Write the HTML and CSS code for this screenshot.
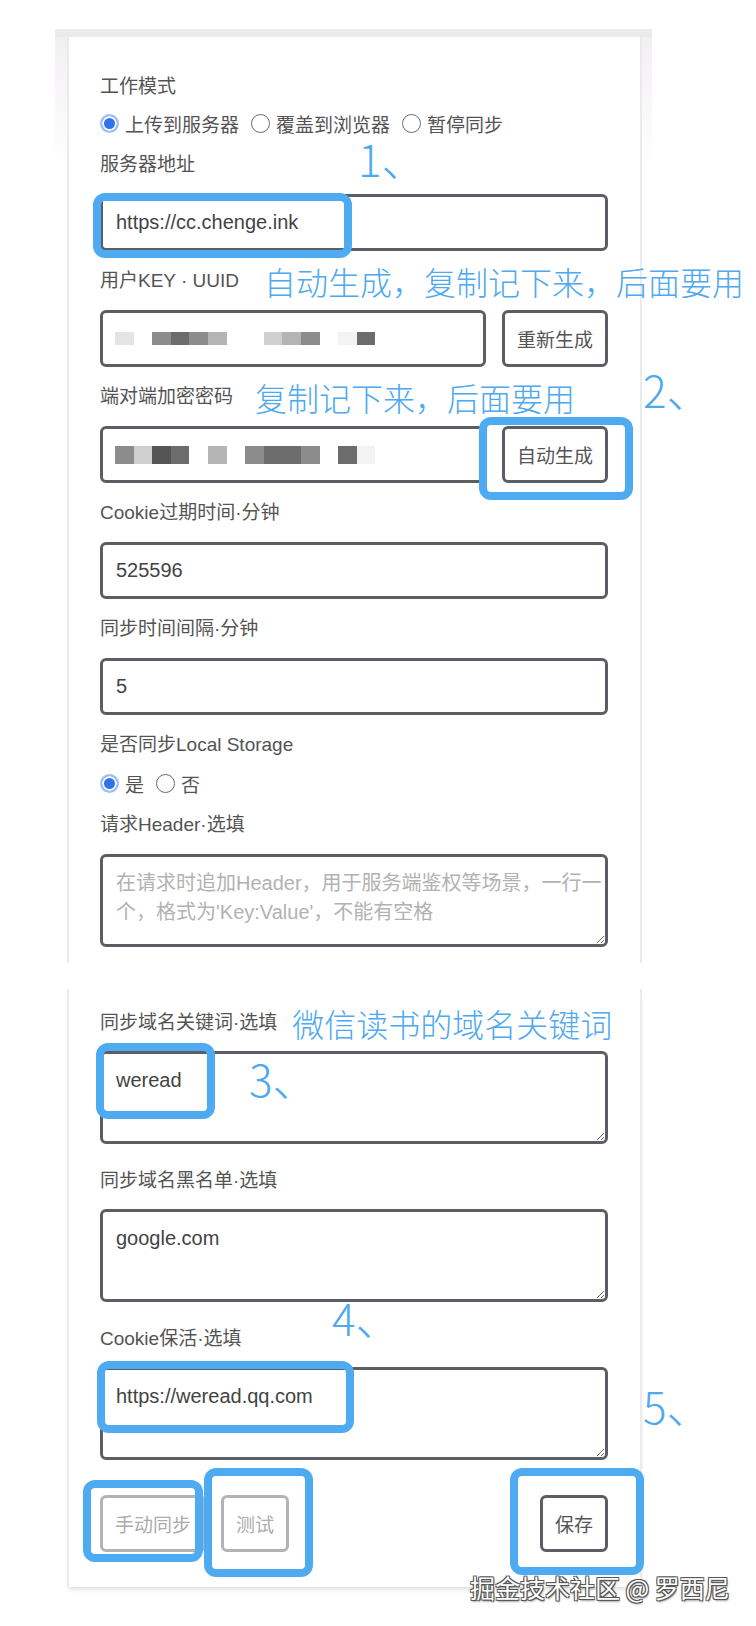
FILE: index.html
```html
<!DOCTYPE html>
<html lang="zh-CN">
<head>
  <meta charset="UTF-8">
  <meta name="viewport" content="width=device-width, initial-scale=1.0">
  <title>CookieCloud</title>
  <link rel="stylesheet" href="styles.css">
</head>
<body>
  <div class="page">
    <div class="topbar"></div>
    <div class="window">
      <div class="card">
        <div class="form">
          <div class="field field-radio">
            <div class="label">工作模式</div>
            <div class="radios">
              <label class="radio"><input type="radio" name="mode" checked><span>上传到服务器</span></label>
              <label class="radio"><input type="radio" name="mode"><span>覆盖到浏览器</span></label>
              <label class="radio"><input type="radio" name="mode"><span>暂停同步</span></label>
            </div>
          </div>

          <div class="field">
            <div class="label">服务器地址</div>
            <input class="input" type="text" value="https://cc.chenge.ink">
          </div>

          <div class="field">
            <div class="label">用户KEY · UUID<span class="note note-uuid">自动生成，复制记下来，后面要用</span></div>
            <div class="input-row">
              <div class="input masked">
                <span class="cell c-faint"></span><span class="cell"></span><span class="cell c-mid"></span><span class="cell c-dark"></span><span class="cell c-mid"></span><span class="cell c-light"></span><span class="cell"></span><span class="cell"></span><span class="cell c-pale"></span><span class="cell c-light"></span><span class="cell c-mid"></span><span class="cell"></span><span class="cell c-ghost"></span><span class="cell c-dark"></span>
              </div>
              <button class="btn">重新生成</button>
            </div>
          </div>

          <div class="field">
            <div class="label">端对端加密密码<span class="note note-pwd">复制记下来，后面要用</span></div>
            <div class="input-row">
              <div class="input masked masked-tall">
                <span class="cell c-mid"></span><span class="cell c-pale"></span><span class="cell c-deep"></span><span class="cell c-dark"></span><span class="cell"></span><span class="cell c-light"></span><span class="cell"></span><span class="cell c-mid"></span><span class="cell c-dark"></span><span class="cell c-dark"></span><span class="cell c-mid"></span><span class="cell"></span><span class="cell c-dark"></span><span class="cell c-ghost"></span>
              </div>
              <button class="btn">自动生成</button>
            </div>
          </div>

          <div class="field">
            <div class="label">Cookie过期时间·分钟</div>
            <input class="input" type="text" value="525596">
          </div>

          <div class="field">
            <div class="label">同步时间间隔·分钟</div>
            <input class="input" type="text" value="5">
          </div>

          <div class="field field-radio field-radio-wide">
            <div class="label">是否同步Local Storage</div>
            <div class="radios">
              <label class="radio"><input type="radio" name="storage" checked><span>是</span></label>
              <label class="radio"><input type="radio" name="storage"><span>否</span></label>
            </div>
          </div>

          <div class="field">
            <div class="label">请求Header·选填</div>
            <textarea class="textarea textarea-header" placeholder="在请求时追加Header，用于服务端鉴权等场景，一行一个，格式为'Key:Value'，不能有空格"></textarea>
          </div>
        </div>
      </div>
    </div>

    <div class="card card-bottom">
      <div class="form form-loose">
        <div class="field field-tight">
          <div class="label">同步域名关键词·选填<span class="note note-domain">微信读书的域名关键词</span></div>
          <textarea class="textarea">weread</textarea>
        </div>

        <div class="field field-tight">
          <div class="label">同步域名黑名单·选填</div>
          <textarea class="textarea">google.com</textarea>
        </div>

        <div class="field field-tight">
          <div class="label">Cookie保活·选填</div>
          <textarea class="textarea">https://weread.qq.com</textarea>
        </div>

        <div class="actions">
          <button class="btn" disabled>手动同步</button>
          <button class="btn" disabled>测试</button>
          <button class="btn btn-save">保存</button>
        </div>
      </div>
    </div>

    <!-- annotations drawn over the screenshot -->
    <div class="mark mark-1"></div>
    <div class="mark mark-2"></div>
    <div class="mark mark-3"></div>
    <div class="mark mark-4"></div>
    <div class="mark mark-sync"></div>
    <div class="mark mark-test"></div>
    <div class="mark mark-save"></div>

    <div class="step step-1">1、</div>
    <div class="step step-2">2、</div>
    <div class="step step-3">3、</div>
    <div class="step step-4">4、</div>
    <div class="step step-5">5、</div>

    <div class="watermark">掘金技术社区 @ 罗西尼</div>
  </div>
</body>
</html>
```

FILE: styles.css
```css
* {
  box-sizing: border-box;
}

body {
  margin: 0;
  background: #fff;
  font-family: "Liberation Sans", "Noto Sans CJK SC", sans-serif;
  color: #545454;
}

.page {
  position: relative;
  width: 756px;
  height: 1626px;
  overflow: hidden;
  padding-top: 29px;
}

.topbar {
  margin-left: 55px;
  width: 597px;
  height: 8px;
  background: #ebebeb;
}

.window {
  margin-left: 55px;
  width: 597px;
  padding: 0 10px 0 12px;
  background: linear-gradient(#f2eff2, #fff 130px);
}

.card {
  background: #fff;
  border-left: 2px solid #ebebeb;
  border-right: 2px solid #ebebeb;
  padding: 38px 32px 16px 31px;
}

.card-bottom {
  width: 575px;
  margin: 26px 0 0 67px;
  padding: 22px 32px 35px 31px;
  box-shadow: 0 4px 5px -2px rgba(0,0,0,0.15);
}

.form {
  display: flex;
  flex-direction: column;
  gap: 18px;
}

.form-loose {
  gap: 25px;
}

.field {
  display: flex;
  flex-direction: column;
  gap: 17px;
}

.field-tight {
  gap: 16px;
}

.field-radio {
  gap: 12px;
}

.field-radio-wide {
  gap: 14px;
}

.label {
  display: flex;
  align-items: center;
  height: 24px;
  font-size: 19px;
  line-height: 24px;
  white-space: nowrap;
}

.note {
  font-family: "Noto Sans CJK SC", sans-serif;
  font-size: 32px;
  font-weight: 300;
  line-height: 24px;
  color: #4ea9ef;
}

.note-uuid {
  margin-left: 25px;
}

.note-pwd {
  margin-left: 22px;
}

.note-domain {
  margin-left: 15px;
}

.radios {
  display: flex;
  gap: 12px;
  height: 24px;
}

.radio {
  display: flex;
  align-items: center;
  gap: 6px;
  font-size: 19px;
}

.radio input {
  appearance: none;
  width: 19px;
  height: 19px;
  margin: 0;
  border: 1.5px solid #6a6a6a;
  border-radius: 50%;
  background: #fff;
}

.radio input:checked {
  border: 2px solid #9dc1f7;
  background: #2f72ec;
  box-shadow: inset 0 0 0 2px #fff;
}

.input,
.textarea {
  width: 100%;
  border: 3px solid #5b5e64;
  border-radius: 6px;
  background: #fff;
  font-family: "Liberation Sans", "Noto Sans CJK SC", sans-serif;
  font-size: 20px;
  color: #434343;
  outline: none;
}

.input {
  height: 57px;
  padding: 0 13px;
}

.textarea {
  display: block;
  height: 93px;
  padding: 12px 13px;
  line-height: 29px;
}

.textarea-header {
  padding-right: 2px;
}

.textarea::placeholder {
  color: #b2b2b2;
}

.input-row {
  display: flex;
  gap: 16px;
}

.input-row .input {
  flex: 1;
}

.masked {
  display: flex;
  align-items: center;
  padding-left: 12px;
}

.cell {
  width: 18.6px;
  height: 13px;
}

.masked-tall .cell {
  height: 18px;
}

.c-ghost { background: #f3f3f3; }
.c-faint { background: #e4e4e4; }
.c-pale { background: #cfcfcf; }
.c-light { background: #b4b4b4; }
.c-mid { background: #8c8c8c; }
.c-dark { background: #6c6c6c; }
.c-deep { background: #555; }

.btn {
  flex: none;
  height: 57px;
  padding: 0 12px;
  border: 3px solid #5b5e64;
  border-radius: 6px;
  background: #fff;
  font-family: "Liberation Sans", "Noto Sans CJK SC", sans-serif;
  font-size: 19px;
  color: #555;
}

.btn:disabled {
  border-color: #b3b3b3;
  color: #acacac;
}

.actions {
  display: flex;
  gap: 15px;
  margin-top: 10px;
}

.btn-save {
  margin-left: auto;
}

.mark {
  position: absolute;
  border: 8px solid #4eabf1;
  border-radius: 12px;
}

.mark-1 { left: 93px; top: 193px; width: 259px; height: 65px; }
.mark-2 { left: 479px; top: 417px; width: 154px; height: 83px; }
.mark-3 { left: 96px; top: 1043px; width: 119px; height: 76px; }
.mark-4 { left: 97px; top: 1361px; width: 257px; height: 72px; }
.mark-sync { left: 83px; top: 1480px; width: 120px; height: 82px; }
.mark-test { left: 204px; top: 1468px; width: 109px; height: 109px; }
.mark-save { left: 510px; top: 1468px; width: 134px; height: 107px; }

.step {
  position: absolute;
  font-family: "Noto Sans CJK SC", sans-serif;
  font-size: 44px;
  font-weight: 300;
  line-height: 32px;
  color: #4ea9ef;
  white-space: nowrap;
}

.step-1 { left: 358px; top: 142px; }
.step-2 { left: 643px; top: 373px; }
.step-3 { left: 249px; top: 1062px; }
.step-4 { left: 332px; top: 1301px; }
.step-5 { left: 643px; top: 1389px; }

.watermark {
  position: absolute;
  left: 470px;
  top: 1572px;
  font-family: "Noto Sans CJK SC", sans-serif;
  font-size: 25px;
  line-height: 30px;
  color: #fff;
  white-space: nowrap;
  text-shadow: 1px 1px 0 #555, -1px -1px 0 #555, 1px -1px 0 #555, -1px 1px 0 #555, 1px 2px 2px rgba(0,0,0,0.4);
}
```
